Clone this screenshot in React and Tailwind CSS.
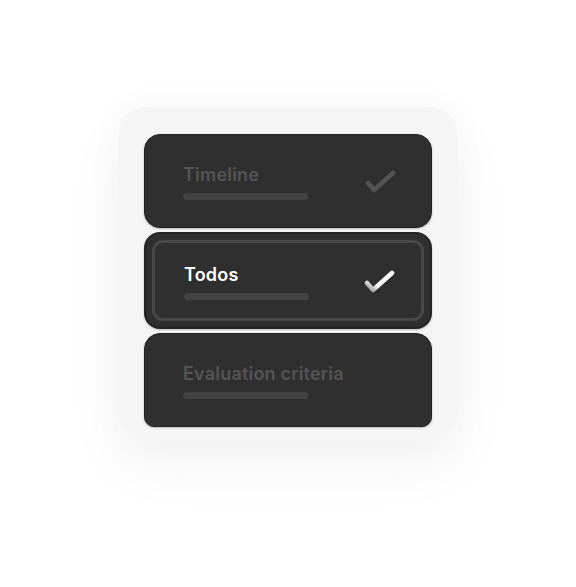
import React from "react";

const Check = ({ active }) => (
  <svg width="32" height="26" viewBox="0 0 32 26" fill="none">
    <defs>
      <linearGradient id="chk" x1="0" y1="1" x2="1" y2="0">
        <stop offset="0" stopColor="#8a8a8a" />
        <stop offset="0.35" stopColor="#ffffff" />
        <stop offset="1" stopColor="#ffffff" />
      </linearGradient>
    </defs>
    <polyline
      points="3,14 9,21 28,4"
      stroke={active ? "url(#chk)" : "#545454"}
      strokeWidth="4.5"
      strokeLinecap="round"
      strokeLinejoin="round"
    />
  </svg>
);

const Row = ({ title, active, check, className }) => (
  <div
    className={
      "relative flex items-center justify-between bg-[#2f2f2f] border border-[#222222] pl-[38px] pr-[34px] shadow-[0_1px_2px_rgba(0,0,0,0.25)] " +
      className
    }
  >
    {active && (
      <div className="absolute inset-[6px] rounded-[11px] border-[3px] border-[#484848]" />
    )}
    <div className="flex flex-col">
      <span
        className={
          "text-[18px] leading-[22px] font-semibold tracking-[0.2px] " +
          (active ? "text-white" : "text-[#555555]")
        }
      >
        {title}
      </span>
      <div className="mt-[7px] h-[7px] w-[125px] rounded-full bg-[#434343]" />
    </div>
    {check ? <Check active={active} /> : <div />}
  </div>
);

export default function App() {
  return (
    <div
      className="flex h-[587px] w-[576px] justify-center bg-white pt-[107px]"
      style={{ fontFamily: "Inter, 'Noto Sans', sans-serif" }}
    >
      <div className="h-[333px] w-[338px] rounded-[26px] bg-[#f5f5f5] px-[25px] pt-[27px] shadow-[0_24px_60px_rgba(0,0,0,0.05),0_0_40px_rgba(0,0,0,0.03)]">
        <div className="flex flex-col">
          <Row
            title="Timeline"
            check
            className="h-[94px] rounded-[16px] pt-[2px]"
          />
          <Row
            title="Todos"
            active
            check
            className="mt-[4px] h-[97px] rounded-[16px] border-2 border-[#242424] pt-[2px]"
          />
          <Row
            title="Evaluation criteria"
            className="mt-[4px] h-[94px] rounded-t-[16px] rounded-b-[10px] pt-[2px]"
          />
        </div>
      </div>
    </div>
  );
}
